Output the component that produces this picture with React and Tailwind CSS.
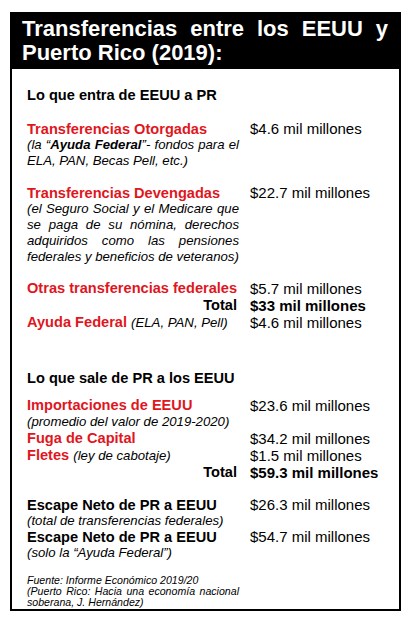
const RED = "text-[#e0161e]";

// one line of justified text (the last line of a paragraph stays left)
function Line({ children, last, className = "" }) {
  return (
    <div className={last ? className : `text-justify [text-align-last:justify] ${className}`}>
      {children}
    </div>
  );
}

function Item({ value, bold, lh = "leading-[16px]", className = "", children }) {
  return (
    <div className={`flex ${className}`}>
      <div className="w-[212px] shrink-0">{children}</div>
      <div className={`ml-[11px] text-[15px] whitespace-nowrap ${lh} ${bold ? "font-bold" : ""}`}>
        {value}
      </div>
    </div>
  );
}

// a line that starts with a bold title; red by default
function TitleLine({ children, black, right, lh = "leading-[16px]" }) {
  return (
    <div
      className={`text-[14.6px] font-bold whitespace-nowrap ${lh} ${black ? "text-black" : RED} ${
        right ? "pr-[2px] text-right" : ""
      }`}
    >
      {children}
    </div>
  );
}

function InlineNote({ children }) {
  return <span className="text-[13.2px] font-normal italic leading-none text-black">{children}</span>;
}

function NoteLine({ children, last, className = "" }) {
  return (
    <Line last={last} className={`text-[13.2px] italic leading-[16px] ${className}`}>
      {children}
    </Line>
  );
}

export default function App() {
  return (
    <div className="min-h-[624px] w-[412px] bg-white pt-[12px] pl-[10px] font-['Liberation_Sans',Arial,sans-serif] text-black">
      <div className="w-[391px] border-2 border-black">
        {/* ===== header ===== */}
        <div className="bg-black pl-[10px] pr-[11px] pt-[3px] pb-[4px] text-[22px] font-bold leading-[24px] text-white">
          <Line>Transferencias entre los EEUU y</Line>
          <Line last>Puerto Rico (2019):</Line>
        </div>

        {/* ===== body ===== */}
        <div className="pl-[15px] pt-[17px] pb-[1px]">
          <div className="text-[14.6px] font-bold leading-[18px]">Lo que entra de EEUU a PR</div>

          <Item value="$4.6 mil millones" className="mt-[17px]">
            <TitleLine>Transferencias Otorgadas</TitleLine>
            <NoteLine>
              (la “<span className="font-bold">Ayuda Federal</span>”- fondos para el
            </NoteLine>
            <NoteLine last>ELA, PAN, Becas Pell, etc.)</NoteLine>
          </Item>

          <Item value="$22.7 mil millones" className="mt-[16px]">
            <TitleLine>Transferencias Devengadas</TitleLine>
            <NoteLine>(el Seguro Social y el Medicare que</NoteLine>
            <NoteLine>se paga de su nómina, derechos</NoteLine>
            <NoteLine>adquiridos como las pensiones</NoteLine>
            <NoteLine last className="whitespace-nowrap">
              federales y beneficios de veteranos)
            </NoteLine>
          </Item>

          <div className="mt-[14.5px]">
            <Item value="$5.7 mil millones" lh="leading-[17px]">
              <TitleLine lh="leading-[17px]">Otras transferencias federales</TitleLine>
            </Item>
            <Item value="$33 mil millones" bold lh="leading-[17px]">
              <TitleLine black right lh="leading-[17px]">
                Total
              </TitleLine>
            </Item>
            <Item value="$4.6 mil millones" lh="leading-[17px]">
              <TitleLine lh="leading-[17px]">
                Ayuda Federal <InlineNote>(ELA, PAN, Pell)</InlineNote>
              </TitleLine>
            </Item>
          </div>

          <div className="mt-[38.5px] text-[14.6px] font-bold leading-[18px]">Lo que sale de PR a los EEUU</div>

          <div className="mt-[9.5px]">
            <Item value="$23.6 mil millones" lh="leading-[17px]">
              <TitleLine lh="leading-[17px]">Importaciones de EEUU</TitleLine>
              <NoteLine last>(promedio del valor de 2019-2020)</NoteLine>
            </Item>
            <Item value="$34.2 mil millones" lh="leading-[17px]">
              <TitleLine lh="leading-[17px]">Fuga de Capital</TitleLine>
            </Item>
            <Item value="$1.5 mil millones" lh="leading-[17px]">
              <TitleLine lh="leading-[17px]">
                Fletes <InlineNote>(ley de cabotaje)</InlineNote>
              </TitleLine>
            </Item>
            <Item value="$59.3 mil millones" bold lh="leading-[17px]">
              <TitleLine black right lh="leading-[17px]">
                Total
              </TitleLine>
            </Item>
          </div>

          <div className="mt-[16.5px]">
            <Item value="$26.3 mil millones">
              <TitleLine black>Escape Neto de PR a EEUU</TitleLine>
              <NoteLine last>(total de transferencias federales)</NoteLine>
            </Item>
            <Item value="$54.7 mil millones">
              <TitleLine black>Escape Neto de PR a EEUU</TitleLine>
              <NoteLine last>(solo la “Ayuda Federal”)</NoteLine>
            </Item>
          </div>

          <div className="mt-[13.5px] w-[212px] text-[10.6px] italic leading-[11px]">
            <Line last>Fuente: Informe Económico 2019/20</Line>
            <Line>(Puerto Rico: Hacia una economía nacional</Line>
            <Line last>soberana, J. Hernández)</Line>
          </div>
        </div>
      </div>
    </div>
  );
}
